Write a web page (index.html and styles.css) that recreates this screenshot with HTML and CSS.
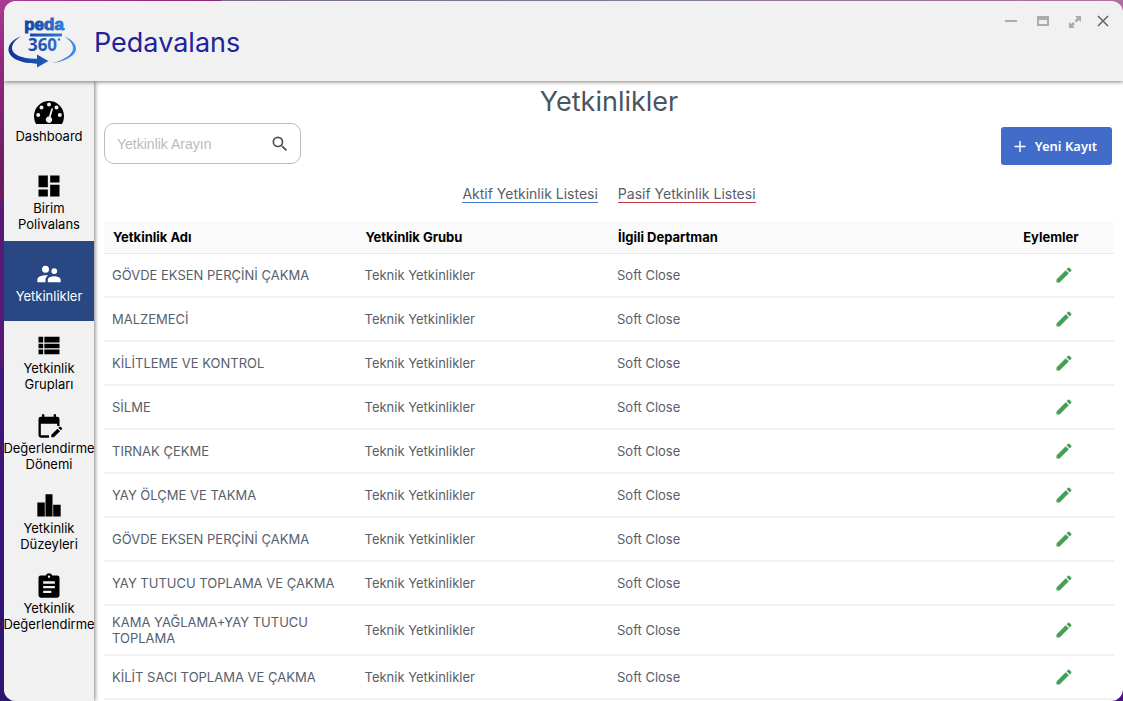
FILE: index.html
```html
<!DOCTYPE html>
<html lang="tr">
<head>
<meta charset="utf-8">
<meta name="viewport" content="width=device-width, initial-scale=1">
<title>Pedavalans</title>
<link rel="stylesheet" href="styles.css">
</head>
<body>
<svg class="defs" width="0" height="0" aria-hidden="true">
  <symbol id="pencil" viewBox="0 0 24 24"><path d="M3 17.250V21h3.750L17.810 9.940l-3.750-3.750L3 17.250zM20.710 7.040a1 1 0 0 0 0-1.410l-2.340-2.340a1 1 0 0 0-1.410 0l-1.830 1.830 3.750 3.750 1.830-1.830z"/></symbol>
</svg>
<div class="window">
  <header class="titlebar">
    <svg class="logo" viewBox="0 0 70 54" role="img" aria-label="Peda 360">
      <defs>
        <linearGradient id="blue" gradientUnits="userSpaceOnUse" x1="0" y1="0" x2="70" y2="0"><stop offset="0.1" stop-color="#12389a"/><stop offset="0.5" stop-color="#2058b8"/><stop offset="1" stop-color="#4595f2"/></linearGradient>
      </defs>
      <g fill="url(#blue)">
        <text class="logo-name" x="36" y="16" text-anchor="middle">peda</text>
        <path d="M22 19.500h32v3H22z"/>
        <text class="logo-number" x="34.500" y="37" text-anchor="middle">360</text>
        <circle cx="51" cy="25.500" r="1.200"/>
        <path d="M13.500 22C4 25.500 0 31 .500 36.500c1 8 13 13 28.500 13.200V53.500L40.500 47 29 40.500v4.200C16 45.500 4.500 41 4 34.500c0-4.500 3-8.500 9.500-12.500z"/>
        <path d="M56.500 22.500c8 3.500 12 8 11.500 13-.800 7-13 12.500-24 13.500 12-2.500 21-8.500 21-15 0-4-3.500-8-8.500-11.500z"/>
      </g>
    </svg>
    <h1 class="app-name">Pedavalans</h1>
    <div class="window-controls">
      <button type="button" aria-label="Küçült"><svg viewBox="0 0 16 16"><path d="M2 7h12v2H2z" fill="#a9acb0"/></svg></button>
      <button type="button" aria-label="Pencere"><svg viewBox="0 0 16 16"><path d="M2 3h12v10H2zM4 7v4h8V7z" fill="#a9acb0" fill-rule="evenodd"/></svg></button>
      <button type="button" aria-label="Tam ekran"><svg viewBox="0 0 16 16"><path d="M8 3h6v6l-2-2-2.500 2.500-2-2L10 5zM2 9l2 2 2-2 2 2-2 2 2 2H2z" fill="#a9acb0"/></svg></button>
      <button type="button" aria-label="Kapat"><svg viewBox="0 0 16 16"><path d="M3 3l10 10M13 3L3 13" fill="none" stroke="#5c6570" stroke-width="1.500"/></svg></button>
    </div>
  </header>
  <div class="body">
    <nav class="sidebar">
      <a class="nav-item" href="#"><svg class="nav-icon wide" viewBox="0 0 30 24"><path fill-rule="evenodd" d="M2 24A15 15 0 0 1 0 16a15 15 0 0 1 30 0 15 15 0 0 1-2 8zM15 2.500a2 2 0 1 0 0 4 2 2 0 0 0 0-4zM7.500 5.500a2 2 0 1 0 0 4 2 2 0 0 0 0-4zm15 0a2 2 0 1 0 0 4 2 2 0 0 0 0-4zM4.200 13a2 2 0 1 0 0 4 2 2 0 0 0 0-4zm21.600 0a2 2 0 1 0 0 4 2 2 0 0 0 0-4zM17.300 8.800l-2.400 7.700a3.200 3.200 0 1 0 1.800.500l2.200-7.700a.85.85 0 0 0-1.600-.500z"/></svg>Dashboard</a>
      <a class="nav-item" href="#"><svg class="nav-icon" viewBox="0 0 24 24"><path d="M3 13h8V3H3zm0 8h8v-6H3zm10 0h8V11h-8zm0-18v6h8V3z"/></svg>Birim<br>Polivalans</a>
      <a class="nav-item active" href="#" aria-current="page"><svg class="nav-icon" viewBox="0 0 24 24"><path d="M16.500 12a2.500 2.500 0 1 0 0-5 2.500 2.500 0 0 0 0 5zM9 11a3 3 0 1 0 0-6 3 3 0 0 0 0 6zm7.500 3c-1.830 0-5.500.92-5.500 2.750V19h11v-2.250c0-1.830-3.670-2.750-5.500-2.750zM9 13c-2.330 0-7 1.170-7 3.500V19h7v-2.250c0-.85.330-2.340 2.370-3.470C10.500 13.100 9.660 13 9 13z"/></svg>Yetkinlikler</a>
      <a class="nav-item" href="#"><svg class="nav-icon" viewBox="0 0 24 24"><path d="M3 14h4v-4H3zm0 5h4v-4H3zM3 9h4V4H3zm5 5h13v-4H8zm0 5h13v-4H8zM8 4v5h13V4z"/></svg>Yetkinlik<br>Grupları</a>
      <a class="nav-item" href="#"><svg class="nav-icon" viewBox="0 0 24 24"><path d="M5 10h14v2h2V6a2 2 0 0 0-2-2h-1V2h-2v2H8V2H6v2H5a2 2 0 0 0-2 2v14a2 2 0 0 0 2 2h7v-2H5zm17.840 4.990l-.710.710-2.120-2.120.710-.710a1 1 0 0 1 1.410 0l.710.710a1 1 0 0 1 0 1.410zm-3.540-.710l2.120 2.120-5.300 5.300H14v-2.120z"/></svg>Değerlendirme<br>Dönemi</a>
      <a class="nav-item" href="#"><svg class="nav-icon" viewBox="0 0 24 24"><path d="M2 9h6.400v12H2zM9 2h6v19H9zM15.600 11H22v10h-6.400z"/></svg>Yetkinlik<br>Düzeyleri</a>
      <a class="nav-item" href="#"><svg class="nav-icon" viewBox="0 0 24 24"><path fill-rule="evenodd" d="M19 3h-4.180a3 3 0 0 0-5.640 0H5a2 2 0 0 0-2 2v15a2 2 0 0 0 2 2h14a2 2 0 0 0 2-2V5a2 2 0 0 0-2-2zm-7 0a1 1 0 1 1 0 2 1 1 0 0 1 0-2zm2 15H7v-2h7zm3-4H7v-2h10zm0-4H7V8h10z"/></svg>Yetkinlik<br>Değerlendirme</a>
    </nav>
    <main class="content">
      <h2 class="page-title">Yetkinlikler</h2>
      <div class="toolbar">
        <form class="search">
          <input type="text" placeholder="Yetkinlik Arayın" aria-label="Yetkinlik Arayın">
          <button type="button" aria-label="Ara"><svg viewBox="0 0 24 24"><path d="M15.500 14h-.790l-.280-.270A6.470 6.470 0 0 0 16 9.500 6.500 6.500 0 1 0 9.500 16c1.610 0 3.090-.590 4.230-1.570l.270.280v.790l5 4.990L20.490 19l-4.990-5zm-6 0a4.500 4.500 0 1 1 0-9 4.500 4.500 0 0 1 0 9z"/></svg></button>
        </form>
        <button type="button" class="new-record"><svg viewBox="0 0 14 14"><path d="M7 2v11M1.500 7.500h11" fill="none" stroke="currentColor" stroke-width="1.500"/></svg>Yeni Kayıt</button>
      </div>
      <div class="tabs">
        <a class="tab tab-active" href="#">Aktif Yetkinlik Listesi</a>
        <a class="tab tab-passive" href="#">Pasif Yetkinlik Listesi</a>
      </div>
      <table class="skills">
        <colgroup><col class="col-name"><col class="col-group"><col class="col-dept"><col class="col-actions"></colgroup>
        <thead><tr><th scope="col">Yetkinlik Adı</th><th scope="col">Yetkinlik Grubu</th><th scope="col">İlgili Departman</th><th scope="col">Eylemler</th></tr></thead>
        <tbody>
          <tr><td>GÖVDE EKSEN PERÇİNİ ÇAKMA</td><td>Teknik Yetkinlikler</td><td>Soft Close</td><td><button type="button" class="edit" aria-label="Düzenle"><svg><use href="#pencil"/></svg></button></td></tr>
          <tr><td>MALZEMECİ</td><td>Teknik Yetkinlikler</td><td>Soft Close</td><td><button type="button" class="edit" aria-label="Düzenle"><svg><use href="#pencil"/></svg></button></td></tr>
          <tr><td>KİLİTLEME VE KONTROL</td><td>Teknik Yetkinlikler</td><td>Soft Close</td><td><button type="button" class="edit" aria-label="Düzenle"><svg><use href="#pencil"/></svg></button></td></tr>
          <tr><td>SİLME</td><td>Teknik Yetkinlikler</td><td>Soft Close</td><td><button type="button" class="edit" aria-label="Düzenle"><svg><use href="#pencil"/></svg></button></td></tr>
          <tr><td>TIRNAK ÇEKME</td><td>Teknik Yetkinlikler</td><td>Soft Close</td><td><button type="button" class="edit" aria-label="Düzenle"><svg><use href="#pencil"/></svg></button></td></tr>
          <tr><td>YAY ÖLÇME VE TAKMA</td><td>Teknik Yetkinlikler</td><td>Soft Close</td><td><button type="button" class="edit" aria-label="Düzenle"><svg><use href="#pencil"/></svg></button></td></tr>
          <tr><td>GÖVDE EKSEN PERÇİNİ ÇAKMA</td><td>Teknik Yetkinlikler</td><td>Soft Close</td><td><button type="button" class="edit" aria-label="Düzenle"><svg><use href="#pencil"/></svg></button></td></tr>
          <tr><td>YAY TUTUCU TOPLAMA VE ÇAKMA</td><td>Teknik Yetkinlikler</td><td>Soft Close</td><td><button type="button" class="edit" aria-label="Düzenle"><svg><use href="#pencil"/></svg></button></td></tr>
          <tr><td>KAMA YAĞLAMA+YAY TUTUCU TOPLAMA</td><td>Teknik Yetkinlikler</td><td>Soft Close</td><td><button type="button" class="edit" aria-label="Düzenle"><svg><use href="#pencil"/></svg></button></td></tr>
          <tr><td>KİLİT SACI TOPLAMA VE ÇAKMA</td><td>Teknik Yetkinlikler</td><td>Soft Close</td><td><button type="button" class="edit" aria-label="Düzenle"><svg><use href="#pencil"/></svg></button></td></tr>
        </tbody>
      </table>
    </main>
  </div>
</div>
</body>
</html>
```
FILE: styles.css
```css
* { box-sizing: border-box; }

body {
  margin: 0;
  min-height: 100vh;
  display: flex;
  padding: 1px 0 0 4px;
  font-family: Inter, "Liberation Sans", sans-serif;
  font-size: 13px;
  line-height: 16px;
  color: #56606c;
  background:
    linear-gradient(90deg, #a83a93, #8e2572 220px, #7d6a92 222px, #85789b 60%, #b06f9c) top / 100% 12px no-repeat,
    linear-gradient(90deg, transparent 50%, #4b1085 50%),
    linear-gradient(#a83a93, #96287f 8%, #6b1c60 25%, #6d1c63 28%, #571b74 29%, #541a76 51%, #42157a 53%, #2c1570);
}

button { padding: 0; border: 0; background: none; font: inherit; color: inherit; cursor: pointer; }
svg { display: block; fill: currentColor; }
a { color: inherit; text-decoration: none; }
.defs { position: absolute; }

.window {
  flex: 1;
  min-width: 0;
  display: flex;
  flex-direction: column;
  overflow: hidden;
  border-radius: 12px;
  background: #fff;
}

.titlebar {
  z-index: 2;
  display: flex;
  align-items: center;
  height: 80px;
  padding-left: 4px;
  background: #f1f1f1;
  box-shadow: 0 1px 4px rgba(0, 0, 0, 0.5);
}
.logo { width: 70px; height: 54px; }
.logo-name {
  font: bold 17px "Liberation Sans", Arial, sans-serif;
  stroke: url(#blue);
  stroke-width: 1px;
}
.logo-number { font: bold 17px "Open Sans", sans-serif; }
.app-name {
  flex: 1;
  margin: 0 0 0 16px;
  padding-top: 3px;
  font-size: 27px;
  line-height: 36px;
  font-weight: 400;
  color: #22229a;
}
.window-controls { display: flex; align-self: flex-start; gap: 16px; padding: 12px 12px 0 0; }
.window-controls button:last-child { margin-left: -4px; }
.window-controls svg { width: 16px; height: 16px; }

.body { flex: 1; display: flex; }

.sidebar {
  z-index: 1;
  flex: none;
  width: 90px;
  background: #f1f1f1;
  box-shadow: 1px 0 4px rgba(0, 0, 0, 0.5);
}
.nav-item {
  display: flex;
  flex-direction: column;
  align-items: center;
  justify-content: center;
  height: 80px;
  padding-top: 2px;
  text-align: center;
  white-space: nowrap;
  color: #000;
}
.nav-icon { width: 28px; height: 28px; }
.nav-icon.wide { width: 30px; height: 24px; margin-bottom: 4px; }
.nav-item.active { background: #284783; color: #fff; }

.content { flex: 1; min-width: 0; padding: 0 9px 0 10px; }
.page-title {
  margin: 0;
  padding-top: 2px;
  font-size: 27px;
  line-height: 37px;
  font-weight: 400;
  text-align: center;
  color: #4b5560;
}
.toolbar { display: flex; justify-content: space-between; align-items: center; padding: 2px 2px 0 0; }
.search {
  display: flex;
  align-items: center;
  width: 197px;
  height: 41px;
  padding: 0 10px 0 12px;
  border: 1px solid #bdbdbd;
  border-radius: 10px;
}
.search input {
  flex: 1;
  min-width: 0;
  padding: 0;
  border: 0;
  outline: 0;
  background: none;
  font: 14px/20px "Liberation Sans", Arial, sans-serif;
  color: #4b5560;
}
.search input::placeholder { color: #bbb; opacity: 1; }
.search svg { width: 20px; height: 20px; color: #44505c; }
.new-record {
  display: flex;
  align-items: center;
  gap: 8px;
  height: 38px;
  margin-top: 5px;
  padding: 0 15px 0 12px;
  border-radius: 3px;
  background: #416cca;
  color: #fff;
  font: 600 13px/20px "Noto Sans", sans-serif;
}
.new-record svg { width: 14px; height: 14px; }

.tabs { display: flex; justify-content: center; gap: 20px; padding: 21px 0 18px; }
.tab { border-bottom: 1px solid; font-size: 14px; line-height: 16px; }
.tab-active { border-color: #4078cc; }
.tab-passive { border-color: #c03a48; }

.skills { width: 100%; table-layout: fixed; border-collapse: separate; border-spacing: 0; }
.col-name, .col-group { width: 25%; }
.col-dept { width: 37.5%; }
.col-actions { width: 12.5%; }
.skills th {
  height: 33px;
  padding: 0 9px;
  border-bottom: 1px solid #ebebeb;
  background: #fafafa;
  font-weight: 700;
  text-align: left;
  color: #000;
}
.skills th:last-child { text-align: center; }
.skills td { height: 44px; padding: 8px; border-bottom: 2px solid #f1f1f1; vertical-align: middle; }
.skills td:last-child { padding: 0 0 0 26px; }
.edit { display: block; margin: 0 auto; color: #43a057; }
.edit svg { width: 20px; height: 20px; }
```
